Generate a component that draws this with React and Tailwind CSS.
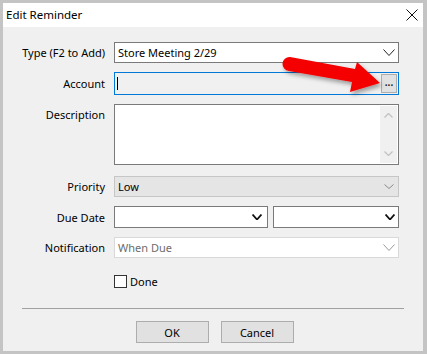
import React from 'react'

const font = { fontFamily: '"Noto Sans", "Open Sans", sans-serif' }

function Chevron({ className = '', color = '#333', width = 11, height = 6, stroke = 1 }) {
  return (
    <svg width={width} height={height} viewBox={`0 0 ${width} ${height}`} className={className}>
      <polyline
        points={`0.5,0.5 ${width / 2},${height - 0.5} ${width - 0.5},0.5`}
        fill="none"
        stroke={color}
        strokeWidth={stroke}
      />
    </svg>
  )
}

function Row({ label, children, className = '', top = false }) {
  return (
    <div className={`flex ${top ? 'items-start' : 'items-center'} ${className}`}>
      <div className={`w-[102px] text-right text-[11px] text-black leading-none ${top ? 'pt-[5px]' : ''}`}>{label}</div>
      <div className="ml-[9px] w-[285px]">{children}</div>
    </div>
  )
}

export default function App() {
  return (
    <div className="relative w-[427px] h-[354px] bg-[#c4c4c4] pl-[3px] pr-[4px] pt-[3px] pb-[3px] overflow-hidden" style={font}>
      <div className="flex flex-col w-full h-full">
        {/* title bar */}
        <div className="flex items-center justify-between h-[24px] bg-white pl-[3px] pr-[5px]">
          <span className="text-[11.5px] text-black">Edit Reminder</span>
          <svg width="12" height="12" viewBox="0 0 12 12">
            <path d="M0.5 0.5 L11.5 11.5 M11.5 0.5 L0.5 11.5" stroke="#111" strokeWidth="1" />
          </svg>
        </div>

        {/* body */}
        <div className="flex-1 bg-[#f0f0f0] pt-[15px]">
          <Row label="Type (F2 to Add)">
            <div className="flex items-center justify-between h-[21px] bg-white border border-[#7a7a7a] pl-[3px] pr-[3px]">
              <span className="text-[11px] text-black leading-none">Store Meeting 2/29</span>
              <Chevron width={12} height={7} color="#222" />
            </div>
          </Row>

          <Row label="Account" className="mt-[9px]">
            <div className="flex items-center justify-between h-[23px] bg-[#f0f0f0] border border-[#0078d7] pl-[2px] pr-[1px]">
              <div className="w-px h-[13px] bg-black" />
              <div className="flex items-center justify-center w-[16px] h-[19px] bg-[#e1e1e1] border border-[#adadad] text-[10px] font-bold leading-none text-[#222] pb-[3px]">
                ...
              </div>
            </div>
          </Row>

          <Row label="Description" className="mt-[9px]" top>
            <div className="flex justify-end h-[61px] bg-white border border-[#7a7a7a] p-px">
              <div className="flex flex-col items-center justify-between w-[17px] bg-[#f0f0f0] py-[7px]">
                <svg width="9" height="5" viewBox="0 0 9 5">
                  <polyline points="0.5,4.5 4.5,0.5 8.5,4.5" fill="none" stroke="#c2c2c2" strokeWidth="1.3" />
                </svg>
                <Chevron width={9} height={5} color="#c2c2c2" stroke={1.3} />
              </div>
            </div>
          </Row>

          <Row label="Priority" className="mt-[11px]">
            <div className="flex items-center justify-between h-[21px] bg-[#e5e5e5] border border-[#c6c6c6] pl-[3px] pr-[4px]">
              <span className="text-[11px] text-black leading-none">Low</span>
              <Chevron width={10} height={5} color="#8a8a8a" />
            </div>
          </Row>

          <Row label="Due Date" className="mt-[9px]">
            <div className="flex gap-[5px]">
              <div className="flex items-center justify-end w-[154px] h-[22px] bg-white border border-[#7a7a7a] pr-[5px]">
                <Chevron width={10} height={6} color="#111" stroke={1.8} />
              </div>
              <div className="flex items-center justify-end flex-1 h-[22px] bg-white border border-[#7a7a7a] pr-[3px]">
                <Chevron width={10} height={6} color="#111" stroke={1.8} />
              </div>
            </div>
          </Row>

          <Row label="Notification" className="mt-[9px]">
            <div className="flex items-center justify-between h-[21px] bg-white border border-[#d9d9d9] pl-[3px] pr-[3px]">
              <span className="text-[11px] text-[#6d6d6d] leading-none">When Due</span>
              <Chevron width={12} height={7} color="#9a9a9a" />
            </div>
          </Row>

          <div className="flex items-center ml-[111px] mt-[17px]">
            <div className="w-[13px] h-[13px] bg-white border border-[#333]" />
            <span className="ml-[3px] text-[11px] text-black leading-none">Done</span>
          </div>

          <div className="mx-[19px] mt-[20px] h-px bg-[#a0a0a0]" />

          <div className="flex justify-center gap-[12px] mt-[12px] pl-[3px]">
            <button className="w-[73px] h-[22px] bg-[#e1e1e1] border border-[#adadad] text-[11px] text-black leading-none">OK</button>
            <button className="w-[73px] h-[22px] bg-[#e1e1e1] border border-[#adadad] text-[11px] text-black leading-none">Cancel</button>
          </div>
        </div>
      </div>

      {/* red annotation arrow */}
      <svg width="427" height="354" viewBox="0 0 427 354" className="absolute left-0 top-0 pointer-events-none">
        <defs>
          <filter id="sh" x="-20%" y="-40%" width="140%" height="180%">
            <feDropShadow dx="2" dy="3" stdDeviation="2" floodColor="#000" floodOpacity="0.35" />
          </filter>
        </defs>
        <path
          d="M290 57 L355 69 L357 62 L380 83 L350 92 L352 82 L289 71 A7 7 0 0 1 290 57 Z"
          fill="#f40000"
          filter="url(#sh)"
        />
      </svg>
    </div>
  )
}
